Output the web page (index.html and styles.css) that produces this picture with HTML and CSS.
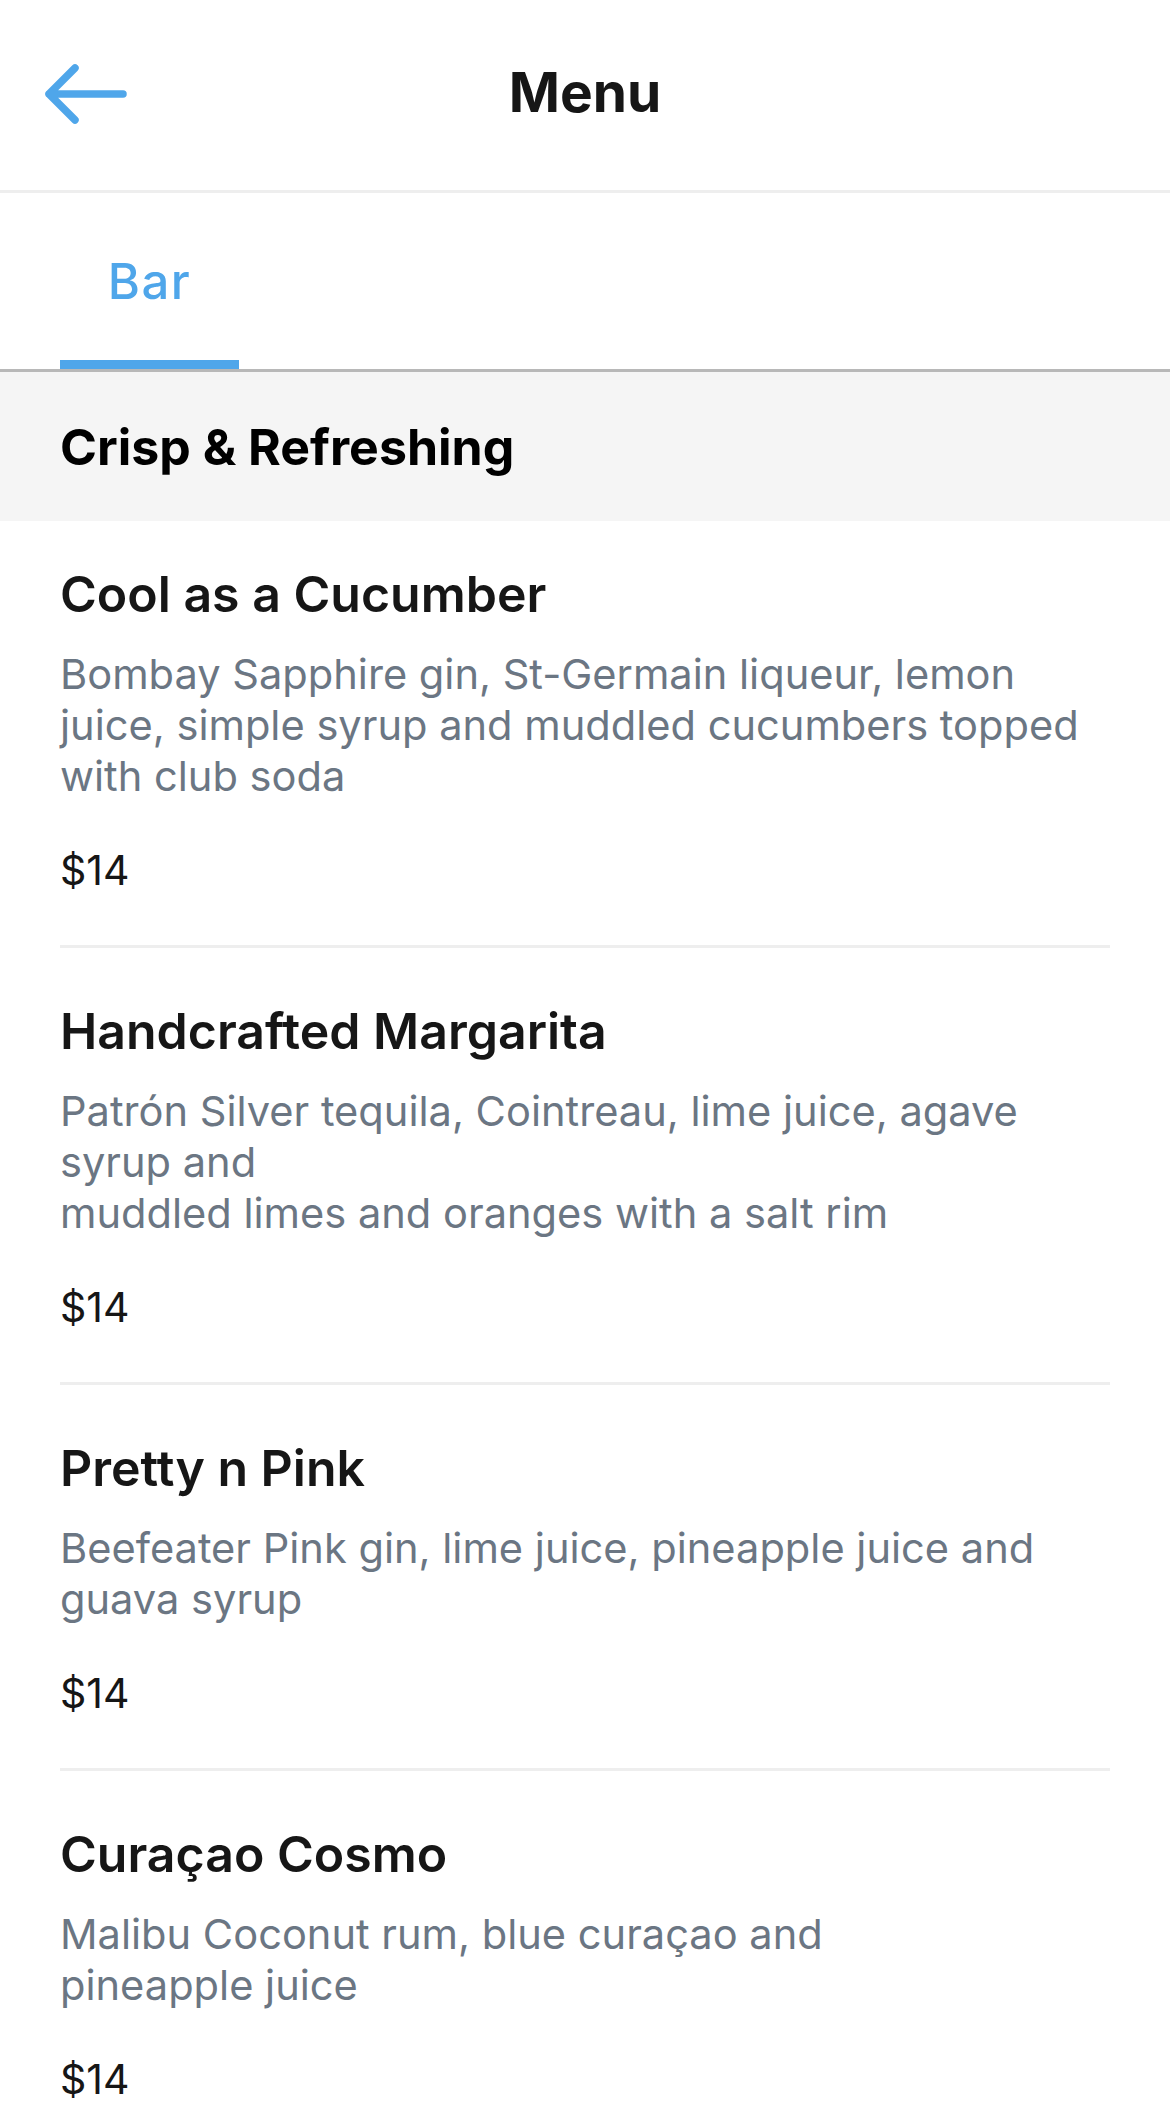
FILE: index.html
```html
<!DOCTYPE html>
<html lang="en">
<head>
<meta charset="utf-8">
<title>Menu</title>
<link rel="stylesheet" href="styles.css">
</head>
<body>
<header class="topbar">
  <button class="back" aria-label="Back">
    <svg width="90" height="70" viewBox="0 0 90 70" aria-hidden="true">
      <path d="M34 9 L8 35 L34 61 M8 35 L82 35" fill="none" stroke="#4fa6ea" stroke-width="7.5" stroke-linecap="round" stroke-linejoin="round"/>
    </svg>
  </button>
  <h1 class="title">Menu</h1>
</header>

<nav class="tabs">
  <a class="tab active">Bar</a>
</nav>

<section class="section-head">
  <h2>Crisp &amp; Refreshing</h2>
</section>

<ul class="items">
  <li class="item first">
    <h3 class="name">Cool as a Cucumber</h3>
    <p class="desc">Bombay Sapphire gin, St-Germain liqueur, lemon<br>juice, simple syrup and muddled cucumbers topped<br>with club soda</p>
    <p class="price">$14</p>
  </li>
  <li class="item">
    <h3 class="name">Handcrafted Margarita</h3>
    <p class="desc">Patrón Silver tequila, Cointreau, lime juice, agave<br>syrup and<br>muddled limes and oranges with a salt rim</p>
    <p class="price">$14</p>
  </li>
  <li class="item">
    <h3 class="name">Pretty n Pink</h3>
    <p class="desc">Beefeater Pink gin, lime juice, pineapple juice and<br>guava syrup</p>
    <p class="price">$14</p>
  </li>
  <li class="item">
    <h3 class="name">Curaçao Cosmo</h3>
    <p class="desc">Malibu Coconut rum, blue curaçao and<br>pineapple juice</p>
    <p class="price">$14</p>
  </li>
</ul>
</body>
</html>
```

FILE: styles.css
```css
* {
  box-sizing: border-box;
}

html, body {
  margin: 0;
  padding: 0;
  background: #ffffff;
}

body {
  font-family: "Inter", "Lato", "Liberation Sans", sans-serif;
  color: #161616;
  overflow: hidden;
}

.topbar {
  position: relative;
  height: 193px;
  border-bottom: 3px solid #eeeeee;
  display: flex;
  align-items: center;
  justify-content: center;
}

.back {
  position: absolute;
  left: 41px;
  top: 59px;
  padding: 0;
  margin: 0;
  border: 0;
  background: none;
  line-height: 0;
}

.title {
  margin: 0;
  font-size: 55px;
  font-weight: 700;
  color: #161616;
  padding-bottom: 6px;
}

.tabs {
  display: flex;
  height: 179px;
  padding-left: 60px;
  border-bottom: 3px solid #b8b8b8;
}

.tab {
  width: 179px;
  display: flex;
  align-items: center;
  justify-content: center;
  font-size: 49px;
  font-weight: 500;
  letter-spacing: 1.5px;
  color: #4fa6ea;
  padding-top: 10px;
}

.tab.active {
  border-bottom: 9px solid #4fa6ea;
}

.section-head {
  background: #f5f5f5;
  height: 149px;
  display: flex;
  align-items: center;
  padding: 0 60px 0;
}

.section-head h2 {
  margin: 0;
  font-size: 50px;
  font-weight: 700;
  color: #000000;
}

.items {
  list-style: none;
  margin: 0;
  padding: 0 60px;
}

.item {
  padding: 53px 0 49px;
  border-bottom: 3px solid #eeeeee;
}

.item.first {
  padding-top: 43px;
}

.name {
  margin: 0;
  font-size: 50px;
  line-height: 60px;
  font-weight: 600;
  color: #161616;
}

.desc {
  margin: 25px 0 0;
  font-size: 41.6px;
  line-height: 51px;
  color: #6b7683;
}

.price {
  margin: 43px 0 0;
  font-size: 41px;
  line-height: 51px;
  color: #161616;
}
```
